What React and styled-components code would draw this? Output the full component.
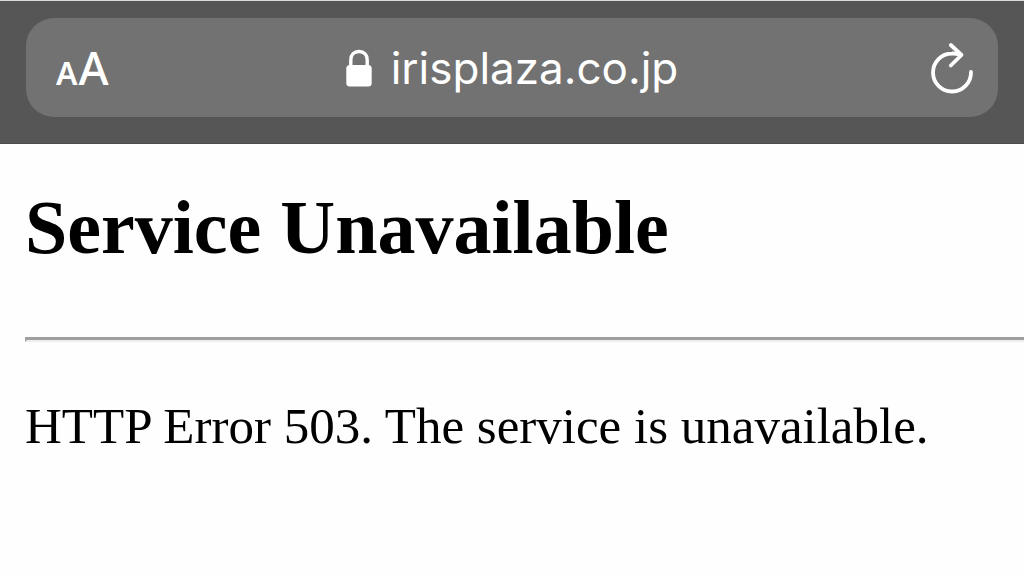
import React from "react"
import styled, { createGlobalStyle } from "styled-components"

const GlobalStyle = createGlobalStyle`
  body {
    margin: 0;
    background: #fefefe;
    color: #000;
    font-family: "Liberation Serif", "Times New Roman", serif;
  }
`

const Toolbar = styled.header`
  padding: 17px 26px 26px;
  background: #565656;
  border-top: 1px solid #d6dcd9;
  border-bottom: 1px solid #4c4c4c;
`

const AddressBar = styled.div`
  display: grid;
  grid-template-columns: 1fr auto 1fr;
  align-items: center;
  height: 99px;
  padding: 0 24px;
  box-sizing: border-box;
  border-radius: 28px;
  background: #727272;
  color: #fff;
`

const BarButton = styled.button`
  display: flex;
  align-items: baseline;
  justify-self: ${(props) => props.$side};
  padding: 0;
  border: 0;
  background: none;
  color: inherit;
`

const TextSizeButton = styled(BarButton)`
  gap: 1px;
  padding: 4px 0 0 6px;
  font-family: "Noto Sans", sans-serif;
  line-height: 56px;
`

const Letter = styled.span`
  font-size: ${(props) => (props.$large ? 46 : 32)}px;
  font-weight: ${(props) => (props.$large ? 500 : 600)};
`

const Address = styled.a`
  display: flex;
  align-items: center;
  gap: 19px;
  color: inherit;
  font-family: Inter, sans-serif;
  font-size: 44px;
  line-height: 56px;
  text-decoration: none;
`

const Page = styled.main`
  padding: 47px 0 48px 25px;
`

const Title = styled.h1`
  margin: 0;
  font-size: 76px;
  line-height: 72px;
`

const Rule = styled.hr`
  margin: 74px 0 54px;
  border: 3px solid;
  border-width: 3px 0 2px 2px;
  border-color: #9f9f9f #eee #eee #9f9f9f;
`

const Message = styled.p`
  margin: 0;
  font-size: 51px;
  line-height: 60px;
`

const LockIcon = () => (
  <svg width="26" height="38" viewBox="0 0 26 38" aria-hidden="true">
    <path
      d="M4.800 18V11C4.800 5.500 8 2.500 13 2.500S21.200 5.500 21.200 11V18"
      fill="none"
      stroke="currentColor"
      strokeWidth="3.400"
    />
    <rect x="0.300" y="16" width="25.400" height="21.500" rx="3.500" fill="currentColor" />
  </svg>
)

const ReloadIcon = () => (
  <svg
    width="44"
    height="52"
    viewBox="0 0 44 52"
    fill="none"
    stroke="currentColor"
    strokeWidth="3.800"
    strokeLinecap="round"
    strokeLinejoin="round"
    aria-hidden="true"
  >
    <path d="M41 30A19 19 0 1 1 22 11.500Q27 11.300 30 13" />
    <path d="M20.800 3L31.500 13L20.800 23.500" />
  </svg>
)

const App = () => {
  return (
    <>
      <GlobalStyle />
      <Toolbar>
        <AddressBar>
          <TextSizeButton type="button" aria-label="Text size" $side="start">
            <Letter>A</Letter>
            <Letter $large>A</Letter>
          </TextSizeButton>
          <Address href="#">
            <LockIcon />
            irisplaza.co.jp
          </Address>
          <BarButton type="button" aria-label="Reload" $side="end">
            <ReloadIcon />
          </BarButton>
        </AddressBar>
      </Toolbar>
      <Page>
        <Title>Service Unavailable</Title>
        <Rule />
        <Message>HTTP Error 503. The service is unavailable.</Message>
      </Page>
    </>
  )
}

export default App
